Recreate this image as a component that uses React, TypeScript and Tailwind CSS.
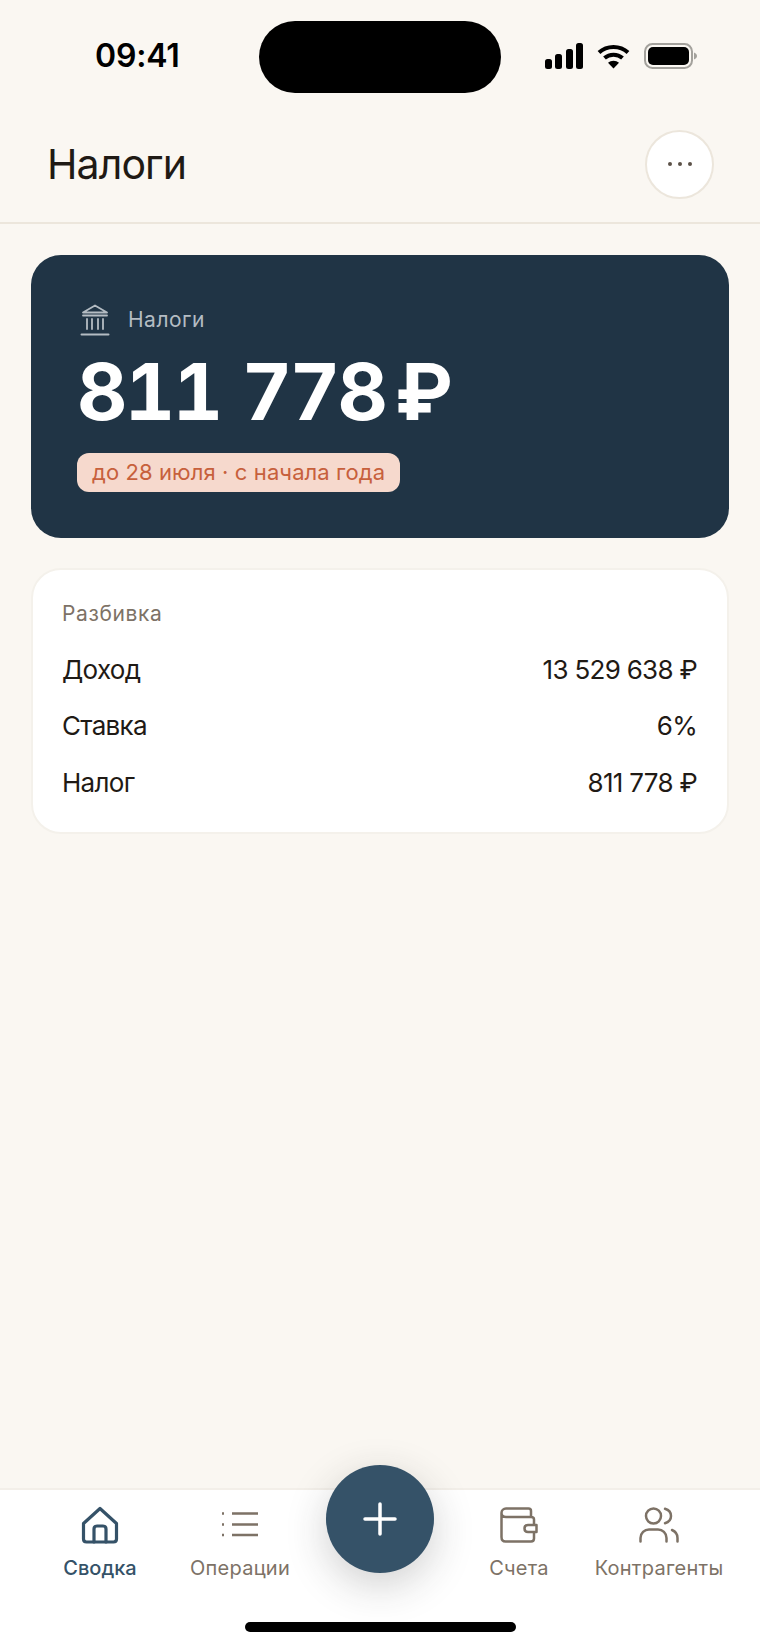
const rows = [
  { label: 'Доход', value: '13 529 638 ₽' },
  { label: 'Ставка', value: '6%' },
  { label: 'Налог', value: '811 778 ₽' },
];

function StatusIcons() {
  return (
    <div className="flex items-center gap-[14px]">
      <svg width="38" height="26" viewBox="0 0 38 26" fill="#000">
        <rect x="0" y="16" width="7" height="10" rx="2.5" />
        <rect x="10" y="11" width="7" height="15" rx="2.5" />
        <rect x="21" y="6" width="7" height="20" rx="2.5" />
        <rect x="31" y="0" width="7" height="26" rx="2.5" />
      </svg>
      <svg width="33" height="25" viewBox="0 0 32 25" fill="none" stroke="#000" strokeWidth="4">
        <path d="M1.5 8.5C9.500 1 22.500 1 30.500 8.500" />
        <path d="M7 14C12 9.500 20 9.500 25 14" />
        <path d="M16 24.500L10.500 18.800C13.500 16 18.500 16 21.500 18.800Z" fill="#000" stroke="none" />
      </svg>
      <svg width="53" height="26" viewBox="0 0 53 26">
        <rect x="1" y="1" width="47" height="24" rx="7.500" fill="none" stroke="#a3a19c" strokeWidth="2" />
        <rect x="4" y="4" width="41" height="18" rx="5" fill="#000" />
        <path d="M50 9.500C52 10.500 53 11.500 53 13C53 14.500 52 15.500 50 16.500Z" fill="#a3a19c" />
      </svg>
    </div>
  );
}

function BankIcon() {
  return (
    <svg width="30" height="32" viewBox="0 0 30 32" fill="none" stroke="#b4bcc3" strokeWidth="1.800" strokeLinecap="round" strokeLinejoin="round">
      <path d="M15 1.500L3 8.500H27L15 1.500Z" />
      <path d="M3 11.500H27" />
      <path d="M7 15V25M12 15V25M18 15V25M23 15V25" />
      <path d="M1.500 30.500H28.500" strokeWidth="2" />
    </svg>
  );
}

function HomeIcon() {
  return (
    <svg width="38" height="38" viewBox="0 0 38 38" fill="none" stroke="#355268" strokeWidth="3.200" strokeLinejoin="round" strokeLinecap="round">
      <path d="M2.500 17.500L19 2.500L35.500 17.500V33C35.500 35 34.500 36 32.500 36H5.500C3.500 36 2.500 35 2.500 33V17.500Z" />
      <path d="M13 36V23C13 21 14 20 16 20H22C24 20 25 21 25 23V36" />
    </svg>
  );
}

function ListIcon() {
  return (
    <svg width="38" height="30" viewBox="0 0 38 30" fill="none" stroke="#7d7266" strokeWidth="2.500">
      <path d="M11 3.500H37M11 14.500H37M11 25H37" />
      <path d="M1 3.500H3M1 14.500H3M1 25H3" />
    </svg>
  );
}

function WalletIcon() {
  return (
    <svg width="38" height="36" viewBox="0 0 38 36" fill="none" stroke="#7d7266" strokeWidth="2.500" strokeLinejoin="round">
      <path d="M31 10V4C31 2.500 30 1.500 28.500 1.500H6C3.500 1.500 1.500 3.500 1.500 6V30C1.500 33 3 34.500 5.500 34.500H31C33 34.500 34 33.500 34 31.500V12.500C34 11 33 10 31 10H6C3.500 10 1.500 8 1.500 6" />
      <path d="M36.500 18H28C25.800 18 24.500 19.500 24.500 21.500C24.500 23.500 25.800 25 28 25H36.500V18Z" fill="#fff" />
    </svg>
  );
}

function UsersIcon() {
  return (
    <svg width="40" height="36" viewBox="0 0 40 36" fill="none" stroke="#7d7266" strokeWidth="2.500" strokeLinecap="round">
      <circle cx="14.500" cy="9" r="7.500" />
      <path d="M1.500 34.500V31C1.500 26 5.500 22.500 10 22.500H19C23.500 22.500 27.500 26 27.500 31V34.500" />
      <path d="M26 1.800C29.500 2.800 32 5.500 32 9C32 12.500 29.500 15.200 26 16.200" />
      <path d="M33 23C36.500 24.500 38.500 27.500 38.500 31V34.500" />
    </svg>
  );
}

function Tab({ label, active, children }: { label: string; active?: boolean; children: React.ReactNode }) {
  return (
    <div className="flex w-[140px] flex-col items-center">
      <div className="flex h-[40px] items-center justify-center">{children}</div>
      <span className={`mt-[11px] text-[20px] leading-[24px] ${active ? 'font-medium tracking-[0px] text-[#355268]' : 'tracking-[0.25px] text-[#7d7266]'}`}>
        {label}
      </span>
    </div>
  );
}

export default function App() {
  return (
    <div className="relative flex h-[1647px] w-[760px] flex-col overflow-hidden bg-[#faf7f2] font-['Inter',sans-serif]">
      <div className="flex h-[114px] items-start justify-between pl-[95px] pr-[63px]">
        <span className="mt-[36px] text-[32px] font-semibold leading-[40px] tracking-[-0.2px] text-black">09:41</span>
        <div className="mt-[43px]">
          <StatusIcons />
        </div>
      </div>
      <div className="absolute left-[259px] top-[21px] h-[72px] w-[242px] rounded-[36px] bg-black" />

      <header className="flex h-[110px] items-center justify-between border-b-2 border-[#ece6dc] pl-[47px] pr-[46px] pb-[8px]">
        <h1 className="text-[41px] font-normal leading-[50px] tracking-[-0.9px] text-[#1f1a15]">Налоги</h1>
        <button className="flex h-[69px] w-[69px] items-center justify-center gap-[6px] rounded-full border-2 border-[#ece6dc] bg-white">
          <span className="h-[4px] w-[4px] rounded-full bg-[#5c5248]" />
          <span className="h-[4px] w-[4px] rounded-full bg-[#5c5248]" />
          <span className="h-[4px] w-[4px] rounded-full bg-[#5c5248]" />
        </button>
      </header>

      <main className="flex flex-1 flex-col gap-[30px] px-[31px] pt-[31px]">
        <section className="flex h-[283px] flex-col items-start rounded-[30px] bg-[#203445] pl-[46px] pt-[49px]">
          <div className="flex items-center gap-[18px] pl-[3px]">
            <BankIcon />
            <span className="text-[21px] leading-[26px] tracking-[0.5px] text-[#b4bcc3]">Налоги</span>
          </div>
          <div className="mt-[17px] text-[78px] font-bold leading-[78px] tabular-nums tracking-[-2.6px] [word-spacing:3px] text-white">
            811 778{'\u2009'}₽
          </div>
          <div className="mt-[22px] flex h-[39px] items-center rounded-[12px] bg-[#f6d9cd] px-[15px] text-[22px] tracking-[0.1px] text-[#c7603c]">
            до 28 июля · с начала года
          </div>
        </section>

        <section className="flex h-[266px] flex-col rounded-[30px] border-2 border-[#f4f1eb] bg-white pl-[29px] pr-[30px] pt-[31px]">
          <div className="text-[21px] leading-[26px] tracking-[0.6px] text-[#7d7266]">Разбивка</div>
          <div className="mt-[14px] flex flex-col">
            {rows.map((row) => (
              <div key={row.label} className="flex h-[56.5px] items-center justify-between text-[26px] tracking-[-0.7px] text-[#1f1a15]">
                <span>{row.label}</span>
                <span>{row.value}</span>
              </div>
            ))}
          </div>
        </section>
      </main>

      <nav className="flex h-[159px] flex-col border-t-2 border-[#f3efe9] bg-white">
        <div className="flex pl-[30px] pr-[31px] pt-[15px]">
          <Tab label="Сводка" active>
            <HomeIcon />
          </Tab>
          <Tab label="Операции">
            <ListIcon />
          </Tab>
          <div className="flex-1" />
          <Tab label="Счета">
            <WalletIcon />
          </Tab>
          <Tab label="Контрагенты">
            <UsersIcon />
          </Tab>
        </div>
        <div className="mt-auto mb-[15px] h-[10px] w-[271px] self-center rounded-full bg-black" />
      </nav>

      <button className="absolute left-[326px] top-[1465px] flex h-[108px] w-[108px] items-center justify-center rounded-full bg-[#355268] shadow-[0_12px_40px_rgba(40,40,40,0.22)]">
        <svg width="34" height="34" viewBox="0 0 34 34" stroke="#fff" strokeWidth="3.500" strokeLinecap="round">
          <path d="M17 2V32M2 17H32" />
        </svg>
      </button>
    </div>
  );
}
